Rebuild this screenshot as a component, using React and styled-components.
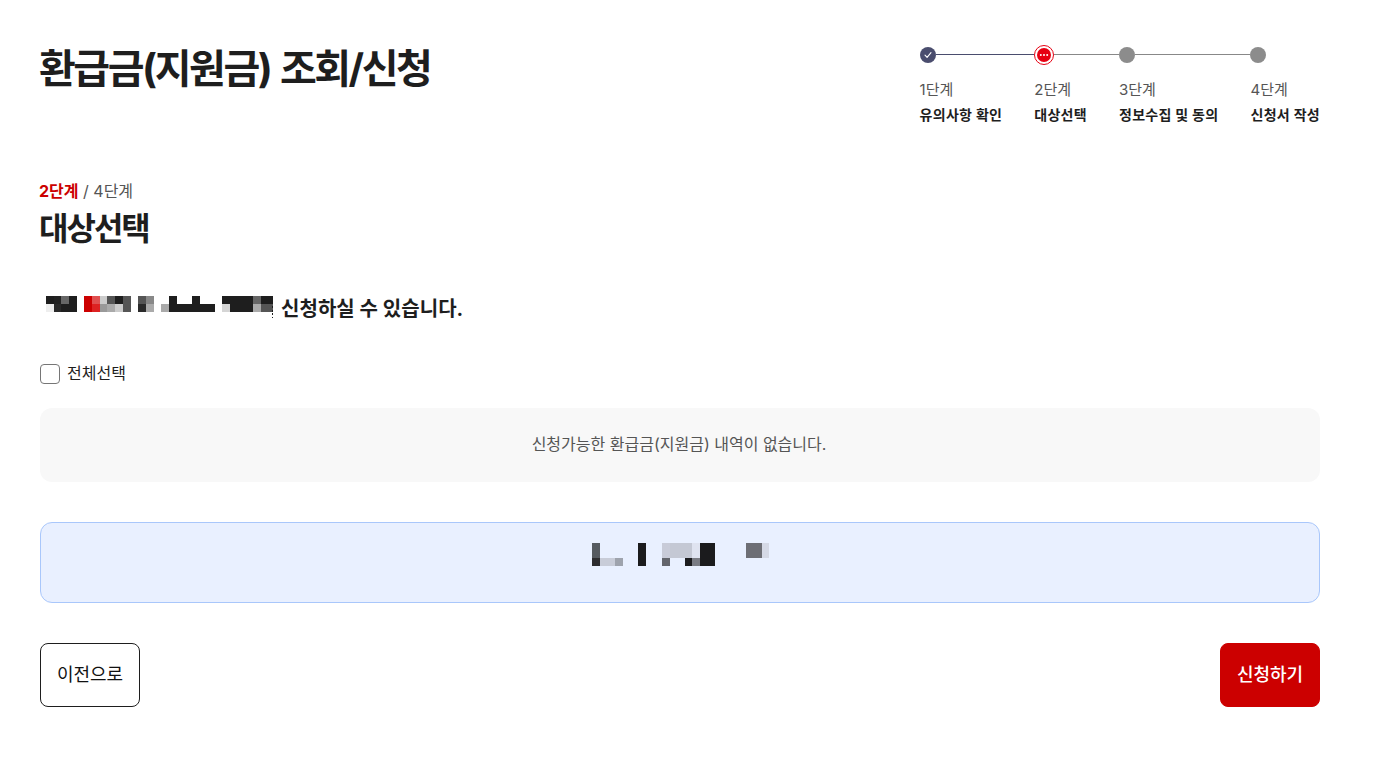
import React from "react";
import styled, { createGlobalStyle } from "styled-components";

const Global = createGlobalStyle`
  html, body { margin: 0; padding: 0; background: #fff; }
  body { font-family: Inter, "Noto Sans CJK KR", "Noto Sans", sans-serif; color: #1e1e1e; }
  * { box-sizing: border-box; }
`;

const Page = styled.main`
  width: 1280px;
  margin-left: 40px;
  padding-top: 45px;
  height: 758px;
`;
const Header = styled.header`
  display: flex;
  justify-content: space-between;
  align-items: flex-start;
  height: 134px;
`;
const Title = styled.h1`
  margin: 0 0 0 -1px;
  font-size: 40px;
  line-height: 48px;
  font-weight: 700;
  letter-spacing: -2.45px;
  word-spacing: 2.5px;
`;
const Steps = styled.ol`
  display: flex;
  gap: 32px;
  margin: 0;
  padding: 0;
  list-style: none;
`;
const Step = styled.li`
  position: relative;
  display: flex;
  flex-direction: column;
  align-items: flex-start;
  &:not(:last-child)::after {
    content: "";
    position: absolute;
    top: 9px;
    left: ${(p) => (p.$active ? 20 : 16)}px;
    right: -32px;
    height: 1px;
    background: ${(p) => (p.$done ? "#4a4d6e" : "#888")};
  }
`;
const Marker = styled.span`
  height: 20px;
  display: flex;
  align-items: center;
`;
const Dot = styled.span`
  width: 16px;
  height: 16px;
  margin-top: -1px;
  border-radius: 50%;
  background: ${(p) => (p.$done ? "#4a4d6e" : "#8c8c8c")};
  display: flex;
  align-items: center;
  justify-content: center;
`;
const ActiveDot = styled.span`
  width: 20px;
  height: 20px;
  border-radius: 50%;
  border: 1px solid #e60012;
  display: flex;
  align-items: center;
  justify-content: center;
  & > span {
    width: 14px;
    height: 14px;
    border-radius: 50%;
    background: #e60012;
    display: flex;
    align-items: center;
    justify-content: center;
  }
`;
const StepNum = styled.span`
  margin-top: 14px;
  font-size: 15px;
  line-height: 22px;
  color: #555;
`;
const StepName = styled.strong`
  margin-top: 3px;
  font-size: 14px;
  line-height: 22px;
  font-weight: 700;
  letter-spacing: 0.3px;
  color: #1e1e1e;
  white-space: nowrap;
`;
const Counter = styled.div`
  margin-left: -1px;
  font-size: 16px;
  line-height: 24px;
  color: #555;
  & > b { color: #cc0000; font-weight: 700; }
`;
const Section = styled.h2`
  margin: 6px 0 0 -1px;
  font-size: 32px;
  line-height: 40px;
  font-weight: 700;
  letter-spacing: -2px;
`;
const Lead = styled.div`
  display: flex;
  align-items: center;
  margin-top: 42px;
  padding-left: 6px;
  height: 32px;
  font-size: 20px;
  font-weight: 700;
  color: #1e1e1e;
  & > svg { display: block; flex: none; }
  & > span { margin-left: 7px; letter-spacing: 0.05px; }
`;
const CheckRow = styled.label`
  display: flex;
  align-items: center;
  gap: 7px;
  margin-top: 39px;
  height: 24px;
  font-size: 16px;
  line-height: 22px;
  color: #1e1e1e;
`;
const CheckText = styled.span`
  margin-top: -2px;
`;
const Box = styled.span`
  width: 20px;
  height: 20px;
  border: 1px solid #767676;
  border-radius: 4px;
  background: #fff;
`;
const Empty = styled.div`
  margin-top: 22px;
  height: 74px;
  padding: 0 2px 5px 0;
  border-radius: 12px;
  background: #f8f8f8;
  display: flex;
  align-items: center;
  justify-content: center;
  font-size: 16px;
  color: #555;
`;
const Notice = styled.div`
  margin-top: 40px;
  height: 81px;
  padding-top: 20px;
  border: 1px solid #a9c7fb;
  border-radius: 12px;
  background: #e9f0ff;
  display: flex;
  justify-content: center;
  align-items: flex-start;
  & > svg { display: block; }
`;
const Actions = styled.div`
  margin-top: 40px;
  display: flex;
  justify-content: space-between;
`;
const Btn = styled.button`
  width: 100px;
  height: 64px;
  border-radius: 8px;
  font: inherit;
  font-size: 18px;
  font-weight: ${(p) => (p.$primary ? 500 : 400)};
  padding: 0 0 5px;
  cursor: pointer;
  border: 1px solid ${(p) => (p.$primary ? "#cc0000" : "#1e1e1e")};
  background: ${(p) => (p.$primary ? "#cc0000" : "#fff")};
  color: ${(p) => (p.$primary ? "#fff" : "#111")};
`;

const W = 7.667;
// [column, row, colour]
const leadCells = [
  [0,0,"#1e1e1e"],[1,0,"#222"],[2,0,"#666"],[3,0,"#1e1e1e"],
  [0,1,"#eee"],[1,1,"#2a2a2a"],[2,1,"#1e1e1e"],[3,1,"#1e1e1e"],
  [5,0,"#cc0000"],[6,0,"#e05050"],[7,0,"#ccc"],[8,0,"#555"],[9,0,"#1e1e1e"],[10,0,"#555"],
  [5,1,"#cc0000"],[6,1,"#dd2222"],[7,1,"#999"],[8,1,"#aaa"],[9,1,"#ccc"],[10,1,"#555"],
  [12,0,"#555"],[13,0,"#888"],[12,1,"#2a2a2a"],[13,1,"#aaa"],
  [15,1,"#aaa"],[16,0,"#1e1e1e"],[16,1,"#1e1e1e"],[17,1,"#1e1e1e"],[18,1,"#1e1e1e"],
  [19,0,"#1e1e1e"],[19,1,"#1e1e1e"],[20,1,"#1e1e1e"],[21,1,"#1e1e1e"],
  [23,0,"#1e1e1e"],[23,1,"#d5d5d5"],[24,0,"#1e1e1e"],[24,1,"#1e1e1e"],[25,0,"#1e1e1e"],[25,1,"#1e1e1e"],
  [26,0,"#1e1e1e"],[26,1,"#1e1e1e"],[27,0,"#666"],[27,1,"#aaa"],[28,0,"#1e1e1e"],[28,1,"#555"],
];

const LeadMosaic = () => (
  <svg width="228" height="22" viewBox="0 0 228 22" shapeRendering="crispEdges">
    {leadCells.map(([c, r, f]) => (
      <rect key={`${c}-${r}`} x={c * W} y={r * 8} width={W + 0.4} height="8" fill={f} />
    ))}
    <rect x="222" y="0" width="5" height="8" fill="#1e1e1e" />
    <rect x="222" y="8" width="5" height="8" fill="#555" />
    <path d="M226.5 10v12" stroke="#1e1e1e" strokeDasharray="2 1.5" />
  </svg>
);

const noticeRects = [
  [0,0,8,15,"#555a60"],[0,15,8,8,"#2c2c2f"],[8,15,15,8,"#c8ccd8"],[23,15,8,8,"#9ea3ad"],
  [46,0,8,23,"#1b1b1d"],
  [70,0,8,15,"#c8cbd8"],[70,15,8,8,"#63656c"],[78,0,22,15,"#c4c8d4"],[93,15,7,8,"#1c1c1f"],
  [100,0,8,15,"#dfe3f0"],[100,15,8,8,"#7a7c84"],[108,0,15,23,"#1b1b1d"],
  [154,0,16,15,"#6d6e75"],[170,0,7,15,"#d5d9e6"],
];

const NoticeMosaic = () => (
  <svg width="177" height="23" viewBox="0 0 177 23" shapeRendering="crispEdges">
    {noticeRects.map(([x, y, w, h, f]) => (
      <rect key={`${x}-${y}`} x={x} y={y} width={w} height={h} fill={f} />
    ))}
  </svg>
);

const steps = [
  { n: "1단계", t: "유의사항 확인", s: "done" },
  { n: "2단계", t: "대상선택", s: "active" },
  { n: "3단계", t: "정보수집 및 동의" },
  { n: "4단계", t: "신청서 작성" },
];

export default function App() {
  return (
    <Page>
      <Global />
      <Header>
        <Title>환급금(지원금) 조회/신청</Title>
        <Steps>
          {steps.map((s) => (
            <Step key={s.n} $done={s.s === "done"} $active={s.s === "active"}>
              <Marker>
                {s.s === "active" ? (
                  <ActiveDot>
                    <span>
                      <svg width="10" height="4" viewBox="0 0 10 4" fill="#fff">
                        <circle cx="1.8" cy="2" r="1" />
                        <circle cx="5" cy="2" r="1" />
                        <circle cx="8.2" cy="2" r="1" />
                      </svg>
                    </span>
                  </ActiveDot>
                ) : (
                  <Dot $done={s.s === "done"}>
                    {s.s === "done" && (
                      <svg width="10" height="10" viewBox="0 0 10 10" fill="none" stroke="#fff" strokeWidth="1.1" strokeLinecap="round" strokeLinejoin="round">
                        <path d="M2 5.2l2.1 2.2 3.9-4.8" />
                      </svg>
                    )}
                  </Dot>
                )}
              </Marker>
              <StepNum>{s.n}</StepNum>
              <StepName>{s.t}</StepName>
            </Step>
          ))}
        </Steps>
      </Header>
      <Counter><b>2단계</b> / 4단계</Counter>
      <Section>대상선택</Section>
      <Lead>
        <LeadMosaic />
        <span>신청하실 수 있습니다.</span>
      </Lead>
      <CheckRow>
        <Box />
        <CheckText>전체선택</CheckText>
      </CheckRow>
      <Empty>신청가능한 환급금(지원금) 내역이 없습니다.</Empty>
      <Notice><NoticeMosaic /></Notice>
      <Actions>
        <Btn>이전으로</Btn>
        <Btn $primary>신청하기</Btn>
      </Actions>
    </Page>
  );
}
